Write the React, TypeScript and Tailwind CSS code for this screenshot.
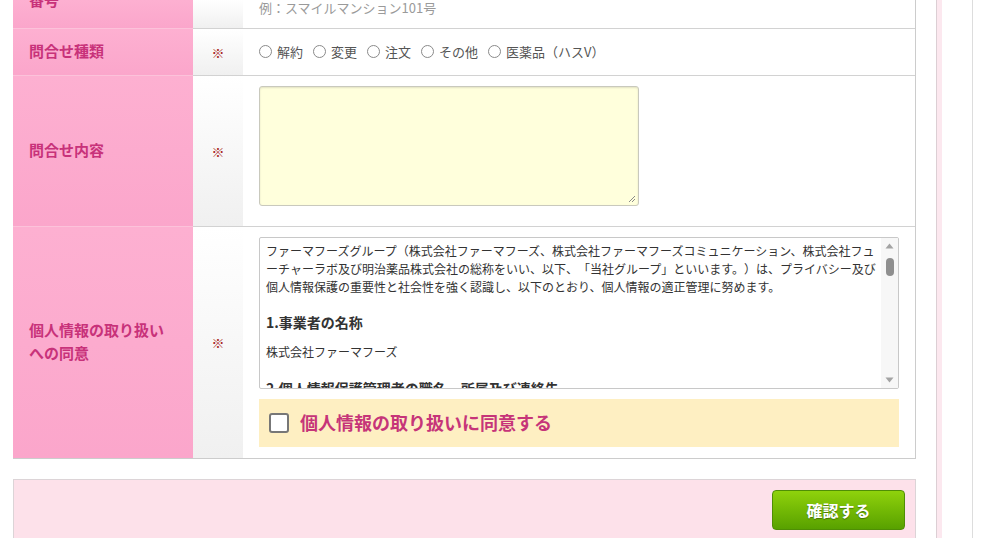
import React from "react";

const FONT = { fontFamily: '"Noto Sans CJK JP", "Noto Sans", sans-serif' };

function Radio({ label }: { label: string }) {
  return (
    <label className="flex items-center gap-[5px] text-[13px] text-[#555] leading-none">
      <span className="w-[13px] h-[13px] rounded-full border border-[#8a8a8a] bg-white shrink-0" />
      <span>{label}</span>
    </label>
  );
}

function Mark() {
  return <span className="text-[13px] text-[#a81e22] leading-none">※</span>;
}

function LabelCell({ children, className = "" }: { children: React.ReactNode; className?: string }) {
  return (
    <div
      className={`w-[180px] shrink-0 flex items-center pl-[16px] pb-[4px] bg-gradient-to-b from-[#fdb0d1] to-[#fba6cb] border-b border-[#fcc2da] text-[15px] font-bold text-[#c8327a] leading-[23px] ${className}`}
    >
      {children}
    </div>
  );
}

function MarkCell({ children, last = false }: { children?: React.ReactNode; last?: boolean }) {
  return (
    <div
      className={`w-[50px] shrink-0 flex items-center justify-center bg-gradient-to-b from-white to-[#f0f0f0] ${
        last ? "" : "border-b border-[#d2d2d2]"
      }`}
    >
      {children}
    </div>
  );
}

function ScrollBar() {
  return (
    <div className="w-[17px] shrink-0 bg-[#f7f7f7] flex flex-col items-center">
      <svg width="17" height="17" viewBox="0 0 17 17" className="shrink-0">
        <path d="M4.5 10.5 L8.5 5.5 L12.5 10.5 Z" fill="#a3a3a3" />
      </svg>
      <div className="w-[8px] h-[18px] rounded-[4px] bg-[#8f8f8f] mt-[3px]" />
      <div className="flex-1" />
      <svg width="17" height="17" viewBox="0 0 17 17" className="shrink-0">
        <path d="M4.5 6.5 L8.5 11.5 L12.5 6.5 Z" fill="#a3a3a3" />
      </svg>
    </div>
  );
}

export default function App() {
  return (
    <div className="w-[984px] h-[538px] overflow-hidden bg-white flex" style={FONT}>
      {/* form column */}
      <div className="ml-[13px] w-[903px] shrink-0 flex flex-col">
        <div className="border-r border-b border-[#cccccc]">
          {/* 建物名・部屋番号 (tail of row) */}
          <div className="flex h-[29px] overflow-hidden">
            <LabelCell className="items-start">
              <span className="-mt-[12px]">番号</span>
            </LabelCell>
            <MarkCell />
            <div className="flex-1 border-b border-[#d2d2d2] pl-[16px]">
              <p className="-mt-[1px] text-[13px] leading-[18px] text-[#9a9a9a]">例：スマイルマンション101号</p>
            </div>
          </div>

          {/* 問合せ種類 */}
          <div className="flex h-[47px]">
            <LabelCell>問合せ種類</LabelCell>
            <MarkCell>
              <Mark />
            </MarkCell>
            <div className="flex-1 border-b border-[#d2d2d2] pl-[16px] pb-[1px] flex items-center gap-[10px]">
              <Radio label="解約" />
              <Radio label="変更" />
              <Radio label="注文" />
              <Radio label="その他" />
              <Radio label="医薬品（ハスV）" />
            </div>
          </div>

          {/* 問合せ内容 */}
          <div className="flex h-[151px]">
            <LabelCell>問合せ内容</LabelCell>
            <MarkCell>
              <Mark />
            </MarkCell>
            <div className="flex-1 border-b border-[#d2d2d2] pl-[16px] pt-[10px]">
              <div className="relative w-[380px] h-[120px] rounded-[3px] border border-[#c9c9bd] bg-[#ffffdc] shadow-[inset_0_1px_2px_rgba(0,0,0,0.12)]">
                <svg width="8" height="8" viewBox="0 0 8 8" className="absolute right-[2px] bottom-[2px]">
                  <path d="M7 1 L1 7 M7 4 L4 7" stroke="#8a8a8a" strokeWidth="1" />
                </svg>
              </div>
            </div>
          </div>

          {/* 個人情報の取り扱いへの同意 */}
          <div className="flex h-[231px]">
            <LabelCell className="border-b-0">
              <span>
                個人情報の取り扱い
                <br />
                への同意
              </span>
            </LabelCell>
            <MarkCell last>
              <Mark />
            </MarkCell>
            <div className="flex-1 pl-[16px] pr-[16px] pt-[10px] flex flex-col">
              <div className="h-[152px] border border-[#c8c8c8] rounded-[2px] flex overflow-hidden bg-white">
                <div className="flex-1 pl-[6px] pt-[4px] overflow-hidden text-[#333] [text-spacing-trim:space-all]">
                  <p className="text-[12px] leading-[18px] whitespace-nowrap">
                    ファーマフーズグループ（株式会社ファーマフーズ、株式会社ファーマフーズコミュニケーション、株式会社フュ
                    <br />
                    ーチャーラボ及び明治薬品株式会社の総称をいい、以下、「当社グループ」といいます。）は、プライバシー及び
                    <br />
                    個人情報保護の重要性と社会性を強く認識し、以下のとおり、個人情報の適正管理に努めます。
                  </p>
                  <p className="mt-[16px] text-[14px] font-bold leading-[20px] whitespace-nowrap">1.事業者の名称</p>
                  <p className="mt-[11px] text-[12px] leading-[18px] whitespace-nowrap">株式会社ファーマフーズ</p>
                  <p className="mt-[17px] text-[14px] font-bold leading-[20px] whitespace-nowrap">
                    2.個人情報保護管理者の職名、所属及び連絡先
                  </p>
                </div>
                <ScrollBar />
              </div>
              <label className="mt-[10px] h-[48px] bg-[#feefc2] flex items-center pl-[10px] gap-[11px]">
                <span className="w-[20px] h-[20px] rounded-[3px] border-2 border-[#777] bg-white shrink-0" />
                <span className="text-[18px] font-bold text-[#c63579] leading-none pb-[2px]">個人情報の取り扱いに同意する</span>
              </label>
            </div>
          </div>
        </div>

        {/* submit bar */}
        <div className="mt-[20px] flex-1 bg-[#fde1ea] border border-[#dcd4d7] border-b-0 flex justify-end items-start pt-[10px] pr-[10px]">
          <button className="w-[133px] h-[40px] rounded-[4px] border border-[#4f8e05] bg-gradient-to-b from-[#8fd20c] to-[#58a100] text-white text-[16px] font-bold [text-shadow:0_1px_1px_rgba(0,0,0,0.35)]">
            確認する
          </button>
        </div>
      </div>

      {/* page edge */}
      <div className="ml-[20px] w-[6px] shrink-0 h-full border-l border-[#dccfd4] bg-[#fce8ef]" />
      <div className="w-[30px] shrink-0" />
      <div className="w-px shrink-0 h-full bg-[#dddddd]" />
    </div>
  );
}
